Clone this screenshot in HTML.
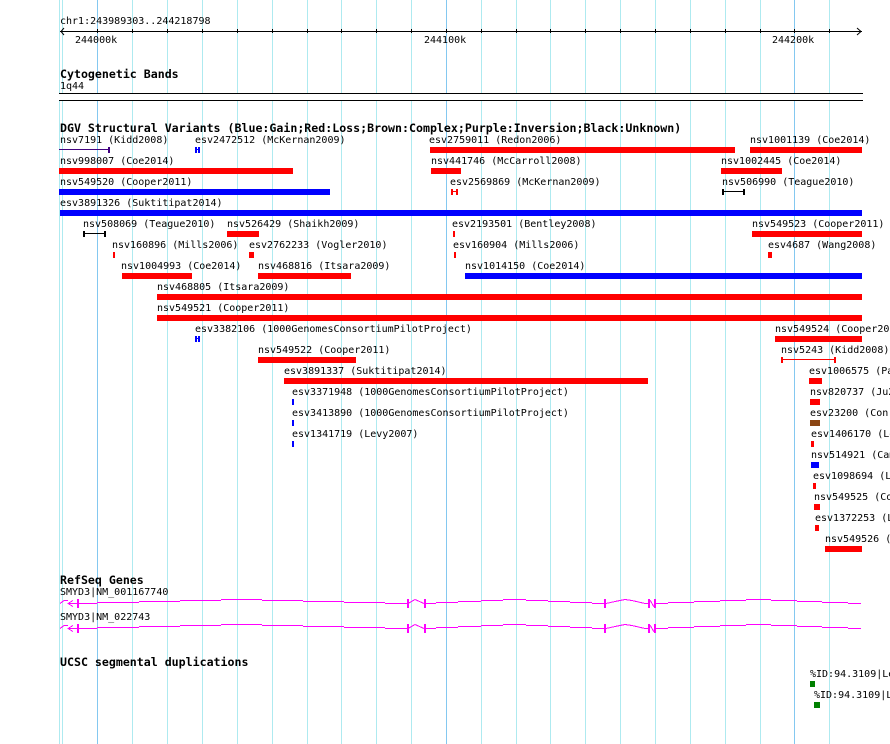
<!DOCTYPE html>
<html><head><meta charset="utf-8"><style>
html,body{margin:0;padding:0;background:#fff;width:890px;height:744px;overflow:hidden}
svg{display:block}
text{font-family:"DejaVu Sans Mono","Liberation Mono",monospace;font-size:10px;fill:#000;white-space:pre}
text.h{font-weight:bold;font-size:11.6px}
</style></head><body>
<svg width="890" height="744" viewBox="0 0 890 744" xmlns="http://www.w3.org/2000/svg">
<g shape-rendering="crispEdges" fill="#aeeaf0">
<rect x="59" y="0" width="1" height="744"/><rect x="62" y="0" width="1" height="744"/>
<rect x="132" y="0" width="1" height="744"/><rect x="167" y="0" width="1" height="744"/><rect x="202" y="0" width="1" height="744"/><rect x="237" y="0" width="1" height="744"/><rect x="272" y="0" width="1" height="744"/><rect x="307" y="0" width="1" height="744"/><rect x="341" y="0" width="1" height="744"/><rect x="376" y="0" width="1" height="744"/><rect x="411" y="0" width="1" height="744"/><rect x="481" y="0" width="1" height="744"/><rect x="516" y="0" width="1" height="744"/><rect x="550" y="0" width="1" height="744"/><rect x="585" y="0" width="1" height="744"/><rect x="620" y="0" width="1" height="744"/><rect x="655" y="0" width="1" height="744"/><rect x="690" y="0" width="1" height="744"/><rect x="725" y="0" width="1" height="744"/><rect x="760" y="0" width="1" height="744"/><rect x="829" y="0" width="1" height="744"/>
<g fill="#84c8f0"><rect x="97" y="0" width="1" height="744"/><rect x="446" y="0" width="1" height="744"/><rect x="794" y="0" width="1" height="744"/></g>
<rect x="59" y="94" width="804" height="6" fill="#fff"/>
</g>

<!-- ruler -->
<g shape-rendering="crispEdges" fill="#000">
<rect x="60" y="31" width="802" height="1"/>
<rect x="97" y="29" width="1" height="4"/><rect x="132" y="29" width="1" height="4"/><rect x="167" y="29" width="1" height="4"/><rect x="202" y="29" width="1" height="4"/><rect x="237" y="29" width="1" height="4"/><rect x="272" y="29" width="1" height="4"/><rect x="307" y="29" width="1" height="4"/><rect x="341" y="29" width="1" height="4"/><rect x="376" y="29" width="1" height="4"/><rect x="411" y="29" width="1" height="4"/><rect x="446" y="29" width="1" height="4"/><rect x="481" y="29" width="1" height="4"/><rect x="516" y="29" width="1" height="4"/><rect x="550" y="29" width="1" height="4"/><rect x="585" y="29" width="1" height="4"/><rect x="620" y="29" width="1" height="4"/><rect x="655" y="29" width="1" height="4"/><rect x="690" y="29" width="1" height="4"/><rect x="725" y="29" width="1" height="4"/><rect x="760" y="29" width="1" height="4"/><rect x="794" y="29" width="1" height="4"/><rect x="829" y="29" width="1" height="4"/>
<rect x="59" y="93" width="804" height="1"/><rect x="59" y="100" width="804" height="1"/>
</g>
<path d="M64 28L61 31.5L64 35M857 28L861 31.5L857 35" fill="none" stroke="#000" stroke-width="1"/>
<text class="h" x="60" y="78">Cytogenetic Bands</text>
<text class="h" x="60" y="132">DGV Structural Variants (Blue:Gain;Red:Loss;Brown:Complex;Purple:Inversion;Black:Unknown)</text>
<text class="h" x="60" y="584">RefSeq Genes</text>
<text class="h" x="60" y="666">UCSC segmental duplications</text>

<!-- labels -->
<g transform="translate(0,-1)">
<text x="60" y="25">chr1:243989303..244218798</text>
<text x="75" y="44">244000k</text><text x="424" y="44">244100k</text><text x="772" y="44">244200k</text>
<text x="60" y="90">1q44</text>
<text x="60" y="144">nsv7191 (Kidd2008)</text>
<text x="195" y="144">esv2472512 (McKernan2009)</text>
<text x="429" y="144">esv2759011 (Redon2006)</text>
<text x="750" y="144">nsv1001139 (Coe2014)</text>
<text x="60" y="165">nsv998007 (Coe2014)</text>
<text x="431" y="165">nsv441746 (McCarroll2008)</text>
<text x="721" y="165">nsv1002445 (Coe2014)</text>
<text x="60" y="186">nsv549520 (Cooper2011)</text>
<text x="450" y="186">esv2569869 (McKernan2009)</text>
<text x="722" y="186">nsv506990 (Teague2010)</text>
<text x="60" y="207">esv3891326 (Suktitipat2014)</text>
<text x="83" y="228">nsv508069 (Teague2010)</text>
<text x="227" y="228">nsv526429 (Shaikh2009)</text>
<text x="452" y="228">esv2193501 (Bentley2008)</text>
<text x="752" y="228">nsv549523 (Cooper2011)</text>
<text x="112" y="249">nsv160896 (Mills2006)</text>
<text x="249" y="249">esv2762233 (Vogler2010)</text>
<text x="453" y="249">esv160904 (Mills2006)</text>
<text x="768" y="249">esv4687 (Wang2008)</text>
<text x="121" y="270">nsv1004993 (Coe2014)</text>
<text x="258" y="270">nsv468816 (Itsara2009)</text>
<text x="465" y="270">nsv1014150 (Coe2014)</text>
<text x="157" y="291">nsv468805 (Itsara2009)</text>
<text x="157" y="312">nsv549521 (Cooper2011)</text>
<text x="195" y="333">esv3382106 (1000GenomesConsortiumPilotProject)</text>
<text x="775" y="333">nsv549524 (Cooper2011)</text>
<text x="258" y="354">nsv549522 (Cooper2011)</text>
<text x="781" y="354">nsv5243 (Kidd2008)</text>
<text x="284" y="375">esv3891337 (Suktitipat2014)</text>
<text x="809" y="375">esv1006575 (Park2010)</text>
<text x="292" y="396">esv3371948 (1000GenomesConsortiumPilotProject)</text>
<text x="810" y="396">nsv820737 (Ju2010)</text>
<text x="292" y="417">esv3413890 (1000GenomesConsortiumPilotProject)</text>
<text x="810" y="417">esv23200 (Conrad2009)</text>
<text x="292" y="438">esv1341719 (Levy2007)</text>
<text x="811" y="438">esv1406170 (Levy2007)</text>
<text x="811" y="459">nsv514921 (Campbell2011)</text>
<text x="813" y="480">esv1098694 (Levy2007)</text>
<text x="814" y="501">nsv549525 (Cooper2011)</text>
<text x="815" y="522">esv1372253 (Levy2007)</text>
<text x="825" y="543">nsv549526 (Cooper2011)</text>
<text x="60" y="596">SMYD3|NM_001167740</text>
<text x="60" y="621">SMYD3|NM_022743</text>
<text x="810" y="678">%ID:94.3109|Level</text>
<text x="814" y="699">%ID:94.3109|Level</text>
</g>

<!-- bars -->
<g shape-rendering="crispEdges" fill="#f00">
<rect x="430" y="147" width="305" height="6"/><rect x="750" y="147" width="112" height="6"/>
<rect x="59" y="168" width="234" height="6"/><rect x="431" y="168" width="30" height="6"/><rect x="721" y="168" width="61" height="6"/>
<rect x="451" y="189" width="2" height="6"/><rect x="456" y="189" width="2" height="6"/><rect x="451" y="191" width="7" height="1"/>
<rect x="227" y="231" width="32" height="6"/><rect x="453" y="231" width="2" height="6"/><rect x="752" y="231" width="110" height="6"/>
<rect x="113" y="252" width="2" height="6"/><rect x="249" y="252" width="5" height="6"/><rect x="454" y="252" width="2" height="6"/><rect x="768" y="252" width="4" height="6"/>
<rect x="122" y="273" width="70" height="6"/><rect x="258" y="273" width="93" height="6"/>
<rect x="157" y="294" width="705" height="6"/><rect x="157" y="315" width="705" height="6"/>
<rect x="775" y="336" width="87" height="6"/>
<rect x="258" y="357" width="98" height="6"/>
<rect x="781" y="357" width="2" height="6"/><rect x="834" y="357" width="2" height="6"/><rect x="781" y="359" width="55" height="1"/>
<rect x="284" y="378" width="364" height="6"/><rect x="809" y="378" width="13" height="6"/>
<rect x="810" y="399" width="10" height="6"/>
<rect x="811" y="441" width="3" height="6"/>
<rect x="813" y="483" width="3" height="6"/>
<rect x="814" y="504" width="6" height="6"/>
<rect x="815" y="525" width="4" height="6"/>
<rect x="825" y="546" width="37" height="6"/>
<rect x="810" y="420" width="10" height="6" fill="#8b4513"/>
<g fill="#00f">
<rect x="195" y="147" width="2" height="6"/><rect x="198" y="147" width="2" height="6"/><rect x="195" y="149" width="5" height="1"/>
<rect x="59" y="189" width="271" height="6"/><rect x="60" y="210" width="802" height="6"/>
<rect x="465" y="273" width="397" height="6"/>
<rect x="195" y="336" width="2" height="6"/><rect x="198" y="336" width="2" height="6"/><rect x="195" y="338" width="5" height="1"/>
<rect x="292" y="399" width="2" height="6"/><rect x="292" y="420" width="2" height="6"/><rect x="292" y="441" width="2" height="6"/>
<rect x="811" y="462" width="8" height="6"/>
</g>
<g fill="#000">
<rect x="722" y="189" width="2" height="6"/><rect x="743" y="189" width="2" height="6"/><rect x="722" y="191" width="23" height="1"/>
<rect x="83" y="231" width="2" height="6"/><rect x="104" y="231" width="2" height="6"/><rect x="83" y="233" width="23" height="1"/>
</g>
<rect x="59" y="149" width="50" height="1" fill="#400080"/><rect x="108" y="147" width="2" height="6" fill="#400080"/>
<g fill="#008000"><rect x="810" y="681" width="5" height="6"/><rect x="814" y="702" width="6" height="6"/></g>
</g>

<!-- genes -->
<g shape-rendering="crispEdges">
<g>
<path fill="none" stroke="#f0f" d="M60 603.5L64 600.5H68M73 600.5L68 603.5L73 606.5M68 603.5H97M97 602.5H139M139 601.5H180M180 600.5H221M221 599.5H262M262 600.5H303M303 601.5H344M344 602.5H385M385 603.5H407M408 603.5L415 599.5L424 603.5M426 603.5H436M436 602.5H458M458 601.5H481M481 600.5H503M503 599.5H526M526 600.5H548M548 601.5H570M570 602.5H592M592 603.5H604M606 603.5L615 601.5L625 599.5L632 600.5L645 603.5H648M650 600L654 607M655 603.5H668M668 602.5H694M694 601.5H720M720 600.5H746M746 599.5H771M771 600.5H797M797 601.5H822M822 602.5H848M848 603.5H861"/>
<path fill="#f0f" d="M77 599h2v9h-2zM407 599h2v9h-2zM424 599h2v9h-2zM604 599h2v9h-2zM648 599h2v9h-2zM654 599h2v9h-2z"/>
</g>
<g transform="translate(0,25)">
<path fill="none" stroke="#f0f" d="M60 603.5L64 600.5H68M73 600.5L68 603.5L73 606.5M68 603.5H97M97 602.5H139M139 601.5H180M180 600.5H221M221 599.5H262M262 600.5H303M303 601.5H344M344 602.5H385M385 603.5H407M408 603.5L415 599.5L424 603.5M426 603.5H436M436 602.5H458M458 601.5H481M481 600.5H503M503 599.5H526M526 600.5H548M548 601.5H570M570 602.5H592M592 603.5H604M606 603.5L615 601.5L625 599.5L632 600.5L645 603.5H648M650 600L654 607M655 603.5H668M668 602.5H694M694 601.5H720M720 600.5H746M746 599.5H771M771 600.5H797M797 601.5H822M822 602.5H848M848 603.5H861"/>
<path fill="#f0f" d="M77 599h2v9h-2zM407 599h2v9h-2zM424 599h2v9h-2zM604 599h2v9h-2zM648 599h2v9h-2zM654 599h2v9h-2z"/>
</g>
</g>
</svg>
</body></html>
